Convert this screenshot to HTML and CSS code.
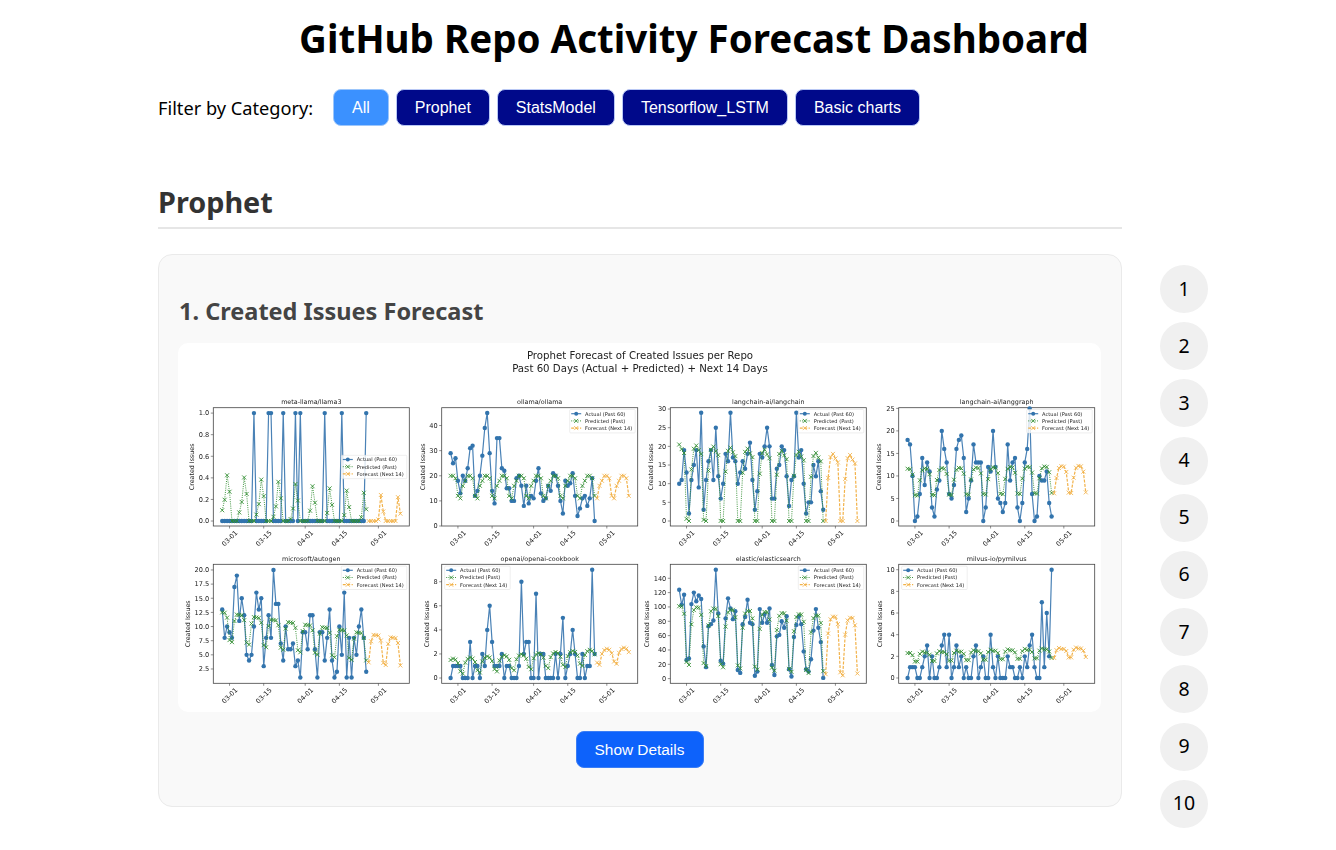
FILE: index.html
```html
<!DOCTYPE html>
<html lang="en">
<head>
    <meta charset="UTF-8">
    <meta name="viewport" content="width=device-width, initial-scale=1.0">
    <title>GitHub Repo Activity Forecast Dashboard</title>
    <link rel="stylesheet" href="styles.css">
</head>
<body>
    <div class="page">
        <h1>GitHub Repo Activity Forecast Dashboard</h1>
        <div class="filter-row">
            <span class="filter-label">Filter by Category:</span>
            <button class="filter-btn active">All</button>
            <button class="filter-btn">Prophet</button>
            <button class="filter-btn">StatsModel</button>
            <button class="filter-btn">Tensorflow_LSTM</button>
            <button class="filter-btn">Basic charts</button>
        </div>
        <div class="columns">
            <main class="content">
                <h2>Prophet</h2>
                <section class="card">
                    <h3>1. Created Issues Forecast</h3>
                    <div class="chart-box">
                        <svg id="forecastChart" class="chart" viewBox="0 0 923 369" width="923" height="369"></svg>
                    </div>
                    <button class="details-btn">Show Details</button>
                </section>
            </main>
            <nav class="side-nav">
                <a class="nav-dot">1</a>
                <a class="nav-dot">2</a>
                <a class="nav-dot">3</a>
                <a class="nav-dot">4</a>
                <a class="nav-dot">5</a>
                <a class="nav-dot">6</a>
                <a class="nav-dot">7</a>
                <a class="nav-dot">8</a>
                <a class="nav-dot">9</a>
                <a class="nav-dot">10</a>
            </nav>
        </div>
    </div>
    <script src="charts.js"></script>
</body>
</html>
```

FILE: styles.css
```css
body {
    font-family: "Noto Sans", sans-serif;
    margin: 0;
    color: #000;
    background: #fff;
}
.page {
    width: 1072px;
    margin-left: 158px;
}
h1 {
    margin: 0;
    padding-top: 12px;
    height: 55px;
    font-size: 38.5px;
    line-height: 52px;
    font-weight: bold;
    text-align: center;
}
.filter-row {
    display: flex;
    align-items: center;
    gap: 7px;
    margin-top: 22px;
}
.filter-label {
    width: 155px;
    font-size: 18.2px;
    margin-right: 13px;
    white-space: nowrap;
}
.filter-btn {
    height: 37px;
    padding: 0 18px;
    border: 1px solid #b9c8f5;
    border-radius: 8px;
    background: #00098a;
    color: #fff;
    font-family: "Liberation Sans", Arial, sans-serif;
    font-size: 16px;
}
.filter-btn.active {
    background: #3b91ff;
    border-color: #9cc6fb;
}
.columns {
    display: flex;
    align-items: flex-start;
    gap: 38px;
}
.content {
    width: 964px;
}
h2 {
    margin: 56px 0 25px;
    padding-bottom: 5px;
    border-bottom: 2px solid #e6e6e6;
    color: #333;
    font-size: 28.8px;
    line-height: 40px;
    font-weight: bold;
}
.card {
    display: flex;
    flex-direction: column;
    align-items: center;
    box-sizing: border-box;
    height: 553px;
    padding: 38px 20px 0 19px;
    background: #f9f9f9;
    border: 1px solid #eaeaea;
    border-radius: 14px;
}
h3 {
    align-self: stretch;
    margin: 0 0 13px;
    padding-left: 1px;
    color: #444;
    font-size: 23.5px;
    line-height: 37px;
    font-weight: bold;
}
.chart-box {
    background: #fff;
    border-radius: 10px;
    height: 369px;
}
.chart {
    display: block;
    filter: blur(0.4px);
}
.details-btn {
    width: 128px;
    height: 37px;
    margin-top: 19px;
    border: 1px solid #3b7df5;
    border-radius: 8px;
    background: #0d62fb;
    color: #fff;
    font-family: "Liberation Sans", Arial, sans-serif;
    font-size: 15.4px;
}
.side-nav {
    display: flex;
    flex-direction: column;
    gap: 9.2px;
    margin-top: 139px;
}
.nav-dot {
    display: flex;
    align-items: center;
    justify-content: center;
    box-sizing: border-box;
    width: 48px;
    height: 48px;
    padding-bottom: 2px;
    border-radius: 50%;
    background: #f0f0f0;
    font-size: 19.5px;
}

/* chart parts */
.chart text {
    font-family: "DejaVu Sans", sans-serif;
    fill: #222;
}
.suptitle {
    font-size: 10.2px;
    text-anchor: middle;
}
.plot-title {
    font-size: 6.4px;
    text-anchor: middle;
}
.tick-label {
    font-size: 6.6px;
}
.y-label {
    font-size: 6.35px;
    text-anchor: middle;
}
.legend-text {
    font-size: 5.1px;
}
.legend-box {
    fill: #fff;
    fill-opacity: 0.8;
    stroke: #ddd;
    stroke-width: 0.5;
}
.spine {
    fill: none;
    stroke: #444;
    stroke-width: 0.8;
}
.tick {
    stroke: #444;
    stroke-width: 0.6;
}
.series {
    fill: none;
}
.actual {
    stroke: #4a82b6;
    stroke-width: 1.2;
}
.predicted {
    stroke: #2e8b2e;
    stroke-width: 0.9;
    stroke-dasharray: 1 1.2;
}
.forecast {
    stroke: #f2b24a;
    stroke-width: 1.2;
    stroke-dasharray: 3 1.4;
}
.dot {
    fill: #3274ad;
}
.cross {
    fill: none;
    stroke-width: 0.85;
}
.cross.predicted-mark {
    stroke: #2e8b2e;
}
.cross.forecast-mark {
    stroke: #f2b24a;
}
```

FILE: charts.js
```js
// Small multiples of actual / predicted / forecast issue counts.
const plots = [
    {
        title: 'meta-llama/llama3', left: 35.3, top: 64.7, height: 118.3, ylim: [-0.046, 1.05],
        yticks: [[0, '0.0'], [0.2, '0.2'], [0.4, '0.4'], [0.6, '0.6'], [0.8, '0.8'], [1, '1.0']],
        labelX: -21.6, legend: 'mid',
        actual: [0,0,0,0,0,0,0,0,0,0,0,0,0,1,0,0,0,0,0,1,1,0,0,0,0,1,0,0,0,0,1,0,1,0,0,0,0,0,0,0,0,0,1,0,0,0,0,0,0,1,0,0,0,0,0,0,0,0,0,1],
        base: [0.1, 0.2, 0.43, 0.28, 0, 0, 0], drift: -0.0029
    },
    {
        title: 'ollama/ollama', left: 263.7, top: 64.7, height: 118.3, ylim: [0, 47.1],
        yticks: [[0, '0'], [10, '10'], [20, '20'], [30, '30'], [40, '40']],
        labelX: -19.4, legend: 'right',
        actual: [29,25,27,18,13,20,18,23,31,32,12,14,20,28,39,45,29,14,9,35,35,23,22,15,15,10,10,19,20,16,8,16,9,12,11,18,23,13,10,11,16,14,21,20,16,10,5,18,16,17,21,12,4,7,11,12,8,11,19,2],
        base: [20, 20, 19, 12, 11, 16, 18], drift: 0
    },
    {
        title: 'langchain-ai/langchain', left: 492.3, top: 64.7, height: 118.3, ylim: [-1.34, 30.36],
        yticks: [[0, '0'], [5, '5'], [10, '10'], [15, '15'], [20, '20'], [25, '25'], [30, '30']],
        labelX: -19.3, legend: 'right',
        actual: [10,11,19,13,2,11,15,19,9,29,3,11,16,19,11,25,12,6,10,18,16,29,17,16,10,13,16,14,18,21,11,3,8,18,17,20,25,20,6,6,14,15,20,19,12,4,11,12,29,17,19,10,2,5,5,15,12,16,8,3],
        base: [20.5, 19.3, 18.3, 0.7, 0, 14, 19.6], drift: -0.04
    },
    {
        title: 'langchain-ai/langgraph', left: 720.7, top: 64.7, height: 118.3, ylim: [-1.11, 25.15],
        yticks: [[0, '0'], [5, '5'], [10, '10'], [15, '15'], [20, '20'], [25, '25']],
        labelX: -19.7, legend: 'right',
        actual: [18,17,10,0,1,6,14,8,13,11,3,1,7,9,20,16,13,6,5,8,16,18,19,14,2,5,9,17,13,13,13,0,3,12,11,20,12,5,4,2,4,17,9,13,14,3,0,4,13,16,25,6,0,1,10,9,9,11,4,1],
        base: [11.6, 11.5, 10.3, 5.7, 5.6, 9, 11.2], drift: 0.009
    },
    {
        title: 'microsoft/autogen', left: 35.3, top: 221.3, height: 119, ylim: [-0.03, 21],
        yticks: [[2.5, '2.5'], [5, '5.0'], [7.5, '7.5'], [10, '10.0'], [12.5, '12.5'], [15, '15.0'], [17.5, '17.5'], [20, '20.0']],
        labelX: -26, legend: 'right',
        actual: [13,8,10,9,8,17,19,11,15,12,5,4,5,10,16,13,15,3,8,12,8,20,14,14,7,4,10,6,6,7,3,4,1,9,9,6,12,12,6,1,9,9,4,8,13,4,1,2,10,5,16,1,8,1,8,5,10,13,8,2],
        base: [12.5, 12.5, 11.7, 7.8, 7.5, 11.3, 12.5], drift: -0.064
    },
    {
        title: 'openai/openai-cookbook', left: 263.7, top: 221.3, height: 119, ylim: [-0.44, 9.45],
        yticks: [[0, '0'], [2, '2'], [4, '4'], [6, '6'], [8, '8']],
        labelX: -15, legend: 'left',
        actual: [0,1,1,1,1,0,0,0,3,0,1,1,0,2,1,4,6,3,1,1,1,2,0,1,1,0,0,0,1,8,2,3,3,0,0,7,0,2,2,0,0,0,0,2,0,2,5,0,1,2,4,2,0,0,2,0,1,1,9,2],
        base: [1.5, 1.6, 1.5, 1.2, 0.5, 0.3, 1.2], drift: 0.013
    },
    {
        title: 'elastic/elasticsearch', left: 492.3, top: 221.3, height: 119, ylim: [-6.5, 159.5],
        yticks: [[0, '0'], [20, '20'], [40, '40'], [60, '60'], [80, '80'], [100, '100'], [120, '120'], [140, '140']],
        labelX: -23.6, legend: 'right',
        actual: [124,103,117,26,28,104,120,108,116,111,45,16,73,76,81,152,91,25,21,84,112,98,83,94,12,8,76,86,110,78,76,4,10,97,78,90,78,98,19,5,59,61,80,71,87,13,3,58,75,87,76,38,13,10,27,67,97,71,51,1],
        base: [101, 101, 91, 24, 20, 77, 97], drift: -0.23
    },
    {
        title: 'milvus-io/pymilvus', left: 720.7, top: 221.3, height: 119, ylim: [-0.49, 10.5],
        yticks: [[0, '0'], [2, '2'], [4, '4'], [6, '6'], [8, '8'], [10, '10']],
        labelX: -19.4, legend: 'left',
        actual: [0,1,1,1,0,0,1,2,3,0,2,0,0,1,3,4,1,4,0,1,3,1,2,0,1,0,0,2,3,0,1,2,0,0,4,1,0,2,0,0,0,2,1,1,0,0,1,0,2,1,3,4,1,0,0,7,1,6,2,10],
        base: [2.3, 2.3, 2.1, 1.5, 1.5, 2.2, 2.4], drift: 0.006
    }
];

const dateTicks = [[3, '03-01'], [17, '03-15'], [34, '04-01'], [48, '04-15'], [64, '05-01']];
const PLOT_WIDTH = 196;
const DAYS = 73;

function drawPlot(p) {
    const bottom = p.top + p.height;
    const xAt = i => (p.left + PLOT_WIDTH * (0.04545 + 0.90909 * i / DAYS)).toFixed(2);
    const yAt = v => (bottom - p.height * (v - p.ylim[0]) / (p.ylim[1] - p.ylim[0])).toFixed(2);
    const model = [];
    for (let i = 0; i <= DAYS; i++) {
        model.push(Math.max(0, p.base[i % 7] + p.drift * i));
    }

    let out = `<text class="plot-title" x="${p.left + PLOT_WIDTH / 2}" y="${p.top - 3.4}">${p.title}</text>`;
    out += `<rect class="spine" x="${p.left}" y="${p.top}" width="${PLOT_WIDTH}" height="${p.height}"/>`;

    p.yticks.forEach(([v, label]) => {
        const y = yAt(v);
        out += `<line class="tick" x1="${p.left - 2.5}" x2="${p.left}" y1="${y}" y2="${y}"/>`;
        out += `<text class="tick-label" text-anchor="end" x="${p.left - 4}" y="${y}" dy="0.36em">${label}</text>`;
    });
    dateTicks.forEach(([i, label]) => {
        const x = xAt(i);
        out += `<line class="tick" x1="${x}" x2="${x}" y1="${bottom}" y2="${bottom + 2.5}"/>`;
        out += `<text class="tick-label" text-anchor="middle" dy="0.36em" transform="translate(${x} ${bottom + 12.3}) rotate(-45)">${label}</text>`;
    });
    const labelY = p.top + p.height / 2;
    out += `<text class="y-label" transform="translate(${p.left + p.labelX + 2.2} ${labelY}) rotate(-90)">Created Issues</text>`;

    const points = (values, start) => values.map((v, n) => `${xAt(start + n)},${yAt(v)}`).join(' ');
    const cross = (cx, cy, cls) => {
        const r = 2;
        return `<path class="cross ${cls}" d="M${cx - r} ${cy - r}L${cx + r} ${cy + r}M${cx - r} ${cy + r}L${cx + r} ${cy - r}"/>`;
    };

    out += `<polyline class="series actual" points="${points(p.actual, 0)}"/>`;
    p.actual.forEach((v, i) => {
        out += `<circle class="dot" cx="${xAt(i)}" cy="${yAt(v)}" r="2.2"/>`;
    });
    out += `<polyline class="series predicted" points="${points(model.slice(0, 60), 0)}"/>`;
    out += `<polyline class="series forecast" points="${points(model.slice(60), 60)}"/>`;
    model.forEach((v, i) => {
        out += cross(+xAt(i), +yAt(v), i < 60 ? 'predicted-mark' : 'forecast-mark');
    });

    out += drawLegend(p, cross);
    return out;
}

function drawLegend(p, cross) {
    let lx = p.left + PLOT_WIDTH - 68;
    let ly = p.top + 1.8;
    if (p.legend === 'left') lx = p.left + 3;
    if (p.legend === 'mid') ly = p.top + 47.6;

    let out = `<rect class="legend-box" x="${lx}" y="${ly}" width="65.5" height="23.4" rx="1"/>`;
    const rows = [
        ['actual', 'Actual (Past 60)'],
        ['predicted', 'Predicted (Past)'],
        ['forecast', 'Forecast (Next 14)']
    ];
    rows.forEach(([cls, text], n) => {
        const y = ly + 4.2 + n * 7.2;
        out += `<line class="series ${cls}" x1="${lx + 1.5}" x2="${lx + 11.5}" y1="${y}" y2="${y}"/>`;
        if (cls === 'actual') {
            out += `<circle class="dot" cx="${lx + 6.5}" cy="${y}" r="2"/>`;
        } else {
            out += cross(lx + 6.5, y, cls + '-mark');
        }
        out += `<text class="legend-text" x="${lx + 15.4}" y="${y}" dy="0.36em">${text}</text>`;
    });
    return out;
}

let svg = '<text class="suptitle" x="462" y="16">Prophet Forecast of Created Issues per Repo</text>';
svg += '<text class="suptitle" x="462" y="29">Past 60 Days (Actual + Predicted) + Next 14 Days</text>';
plots.forEach(p => {
    svg += drawPlot(p);
});
document.getElementById('forecastChart').innerHTML = svg;
```
